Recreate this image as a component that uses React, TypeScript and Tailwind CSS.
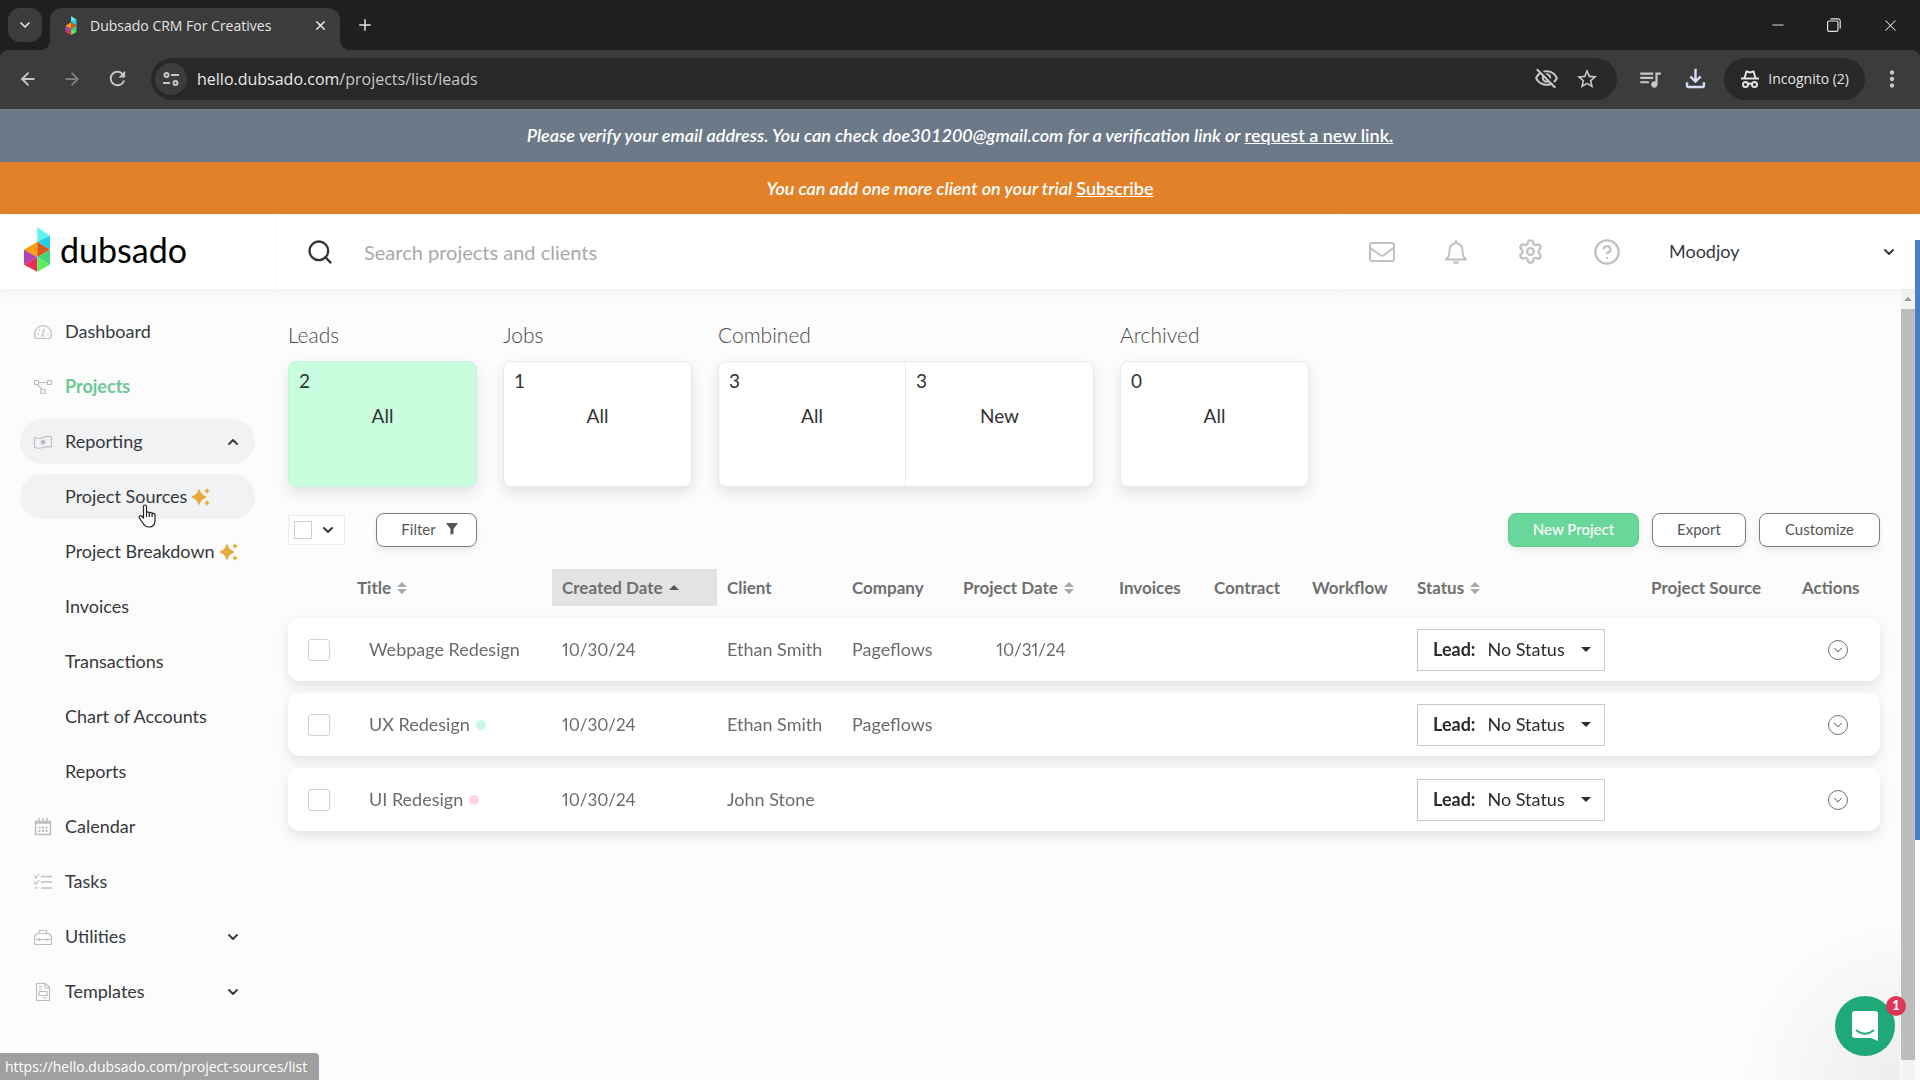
import { useState, type ReactNode } from 'react';
import { ArrowLeft, ArrowRight, ChevronDown, ChevronUp, CircleHelp, Minus, Plus, Search, Settings, X } from 'lucide-react';
import { MdOutlineFileDownload, MdOutlineVisibilityOff, MdQueueMusic, MdRefresh, MdStarOutline, MdMoreVert } from 'react-icons/md';

const chromeFont = "font-['Open_Sans','Noto_Sans',sans-serif]";

function DubsadoMark({ className }: { className: string }) {
  return (
    <svg viewBox="0 0 78 134" className={className} aria-hidden="true">
      <path d="M40 0 78 26 40 44Z" fill="#5ff3f4" />
      <path d="M78 26V68L40 44Z" fill="#22cfe6" />
      <path d="M0 68 40 44V90Z" fill="#f6a012" />
      <path d="M40 44 78 68 40 90Z" fill="#d9581c" />
      <path d="M0 68 40 90 0 113Z" fill="#b044b4" />
      <path d="M0 113 40 90V134Z" fill="#e5305c" />
      <path d="M40 90 78 68V113Z" fill="#3fd67c" />
      <path d="M40 90 78 113 40 134Z" fill="#5cf05a" />
    </svg>
  );
}

function IncognitoIcon() {
  return (
    <svg viewBox="0 0 20 20" className="size-5" fill="none" stroke="currentColor" strokeWidth="2" aria-hidden="true">
      <path d="M1 9.5h18" />
      <path d="M4.5 9 6.5 2.5l3.5 1 3.5-1 2 6.5" />
      <circle cx="5.5" cy="15.5" r="2.5" />
      <circle cx="14.5" cy="15.5" r="2.5" />
      <path d="M8 15q2-1 4 0" />
    </svg>
  );
}

function SiteInfoIcon() {
  return (
    <svg viewBox="0 0 16 16" className="size-4" fill="none" stroke="currentColor" strokeWidth="2" aria-hidden="true">
      <circle cx="3.5" cy="4" r="2" />
      <path d="M8 4h8M0 12h7" />
      <circle cx="12.5" cy="12" r="2" />
    </svg>
  );
}

function MailIcon() {
  return (
    <svg viewBox="0 0 26 20" className="h-5 w-[26px]" fill="none" stroke="currentColor" strokeWidth="2" strokeLinejoin="round" aria-hidden="true">
      <rect x="1" y="1" width="24" height="18" rx="2" />
      <path d="M1.500 6 11 13q2 1.500 4 0l9.500-7" />
    </svg>
  );
}

function BellIcon() {
  return (
    <svg viewBox="0 0 24 26" className="h-[26px] w-6" fill="none" stroke="currentColor" strokeWidth="2" aria-hidden="true">
      <path d="M12 1v3M2 20.500h20c-3-2.500-3.500-4.500-3.500-9a6.500 7.500 0 0 0-13 0c0 4.500-.5 6.500-3.500 9Z" strokeLinejoin="round" />
      <path d="M9.500 23.500h5" strokeWidth="2.500" />
    </svg>
  );
}

function Sparkle() {
  return (
    <svg viewBox="0 0 18 18" className="size-[18px] text-[#e8a93c]" fill="currentColor" aria-hidden="true">
      <path d="M7 2q1.500 5.500 6.500 7-5 1.500-6.500 7-1.500-5.500-6.500-7 5-1.500 6.500-7Z" stroke="currentColor" strokeWidth="1.400" strokeLinejoin="round" />
      <path d="M15 0q.6 2.400 3 3-2.400.6-3 3-.6-2.400-3-3 2.400-.6 3-3ZM15 12q.6 2.400 3 3-2.400.6-3 3-.6-2.400-3-3 2.400-.6 3-3Z" />
    </svg>
  );
}

function SortIcon() {
  return (
    <svg viewBox="0 0 10 12" className="h-3 w-2.5 text-[#a9a9a9]" fill="currentColor" aria-hidden="true">
      <path d="M5 0l5 5H0ZM5 12l5-5H0Z" />
    </svg>
  );
}

function HandCursor() {
  return (
    <svg viewBox="0 0 18 24" className="pointer-events-none absolute left-[118px] top-[30px] h-6 w-[18px]" fill="#fff" stroke="#222" strokeWidth="1.2" strokeLinejoin="round" aria-hidden="true">
      <path d="M5.500 14V2.500c0-2 3-2 3 0V9c.3-1.500 2.700-1.300 2.800.3.500-1.300 2.700-1 2.800.5.700-1 2.900-.7 2.900 1.200v5.500c0 4-2 6.500-6 6.500-3.500 0-5-1.500-6.500-4.500L1.300 14c-.8-1.500.7-3 2.200-2Z" />
      <path d="M8.500 9v4M11.300 9.500V13M14.100 10v3" fill="none" />
    </svg>
  );
}

// sidebar glyphs share one 18px box and a thin stroke
const glyphs: Record<string, ReactNode> = {
  Dashboard: (
    <>
      <path d="M1.800 15.500q-1.200-2-1.200-4.500a8.400 8.400 0 0 1 16.800 0q0 2.500-1.200 4.500Z" strokeLinejoin="round" />
      <path d="m8.200 12.500 2.300-7M3.500 11H5M5 6.500l1 1M13 11h1.500M7 13h3.500" />
    </>
  ),
  Projects: (
    <>
      <path d="M.5 2.500h4v4h-4ZM13.500 2.500h4v4h-4ZM7 11.500h4v4H7ZM4.500 4.500h9M3.500 6.500 8 11.500" />
    </>
  ),
  Reporting: (
    <>
      <path d="M.5 4.500q4 2 8.500 0t8.500-.5v10q-4-1-8.500.5t-8.500 0Z" />
      <circle cx="9" cy="9.200" r="1.800" fill="currentColor" />
    </>
  ),
  Calendar: (
    <>
      <path d="M1.500 3.500h15v13h-15ZM5 0v4M9 0v4M13 0v4M1.500 5h15" strokeWidth="1.500" />
      <path d="M4.500 9.500h9M4.500 13h9" strokeWidth="2" strokeDasharray="2 1.500" />
    </>
  ),
  Tasks: (
    <>
      <path d="m0 3 2 2 3-4M0 9l2 2 3-4" />
      <path d="M7 3.500h11M7 9h11M7 15h11M1 15h2.500" strokeWidth="1.500" />
    </>
  ),
  Utilities: (
    <>
      <path d="M.5 8.500 3 5.500h12l2.500 3v8H.5ZM5.500 5.500v-3h7v3M.5 11.500h17M5.500 10v3M12.500 10v3" />
    </>
  ),
  Templates: (
    <>
      <path d="M2.500.5h9l4 4v13h-13ZM11 .5V5h4.500M5 8.500h8v4H5ZM5 3.500h3M5 6h3M9 15h4" />
    </>
  ),
};

type NavItem = { label: string; icon?: boolean; chevron?: 'up' | 'down'; active?: boolean; pill?: boolean; isNew?: boolean; cursor?: boolean };

const nav: NavItem[] = [
  { label: 'Dashboard', icon: true },
  { label: 'Projects', icon: true, active: true },
  { label: 'Reporting', icon: true, chevron: 'up', pill: true },
  { label: 'Project Sources', isNew: true, pill: true, cursor: true },
  { label: 'Project Breakdown', isNew: true },
  { label: 'Invoices' },
  { label: 'Transactions' },
  { label: 'Chart of Accounts' },
  { label: 'Reports' },
  { label: 'Calendar', icon: true },
  { label: 'Tasks', icon: true },
  { label: 'Utilities', icon: true, chevron: 'down' },
  { label: 'Templates', icon: true, chevron: 'down' },
];

const groups = [
  { title: 'Leads', cards: [{ count: 2, label: 'All' }], selected: true },
  { title: 'Jobs', cards: [{ count: 1, label: 'All' }] },
  { title: 'Combined', cards: [{ count: 3, label: 'All' }, { count: 3, label: 'New' }] },
  { title: 'Archived', cards: [{ count: 0, label: 'All' }] },
];

const columns = [
  { label: '', width: 'w-[59px]' },
  { label: 'Title', width: 'w-[205px]', sort: true },
  { label: 'Created Date', width: 'w-[165px]', sorted: true },
  { label: 'Client', width: 'w-[125px]' },
  { label: 'Company', width: 'w-[111px]' },
  { label: 'Project Date', width: 'w-[156px]', sort: true },
  { label: 'Invoices', width: 'w-[95px]' },
  { label: 'Contract', width: 'w-[98px]' },
  { label: 'Workflow', width: 'w-[105px]' },
  { label: 'Status', width: 'w-[234px]', sort: true },
  { label: 'Project Source', width: 'w-[151px]' },
  { label: 'Actions', width: 'w-[88px]' },
];

const projects = [
  { title: 'Webpage Redesign', dot: '', created: '10/30/24', client: 'Ethan Smith', company: 'Pageflows', date: '10/31/24' },
  { title: 'UX Redesign', dot: 'bg-[#c3fbe6]', created: '10/30/24', client: 'Ethan Smith', company: 'Pageflows', date: '' },
  { title: 'UI Redesign', dot: 'bg-[#ffd3e2]', created: '10/30/24', client: 'John Stone', company: '', date: '' },
];

function BrowserChrome() {
  return (
    <div className={`${chromeFont} bg-[#1f1f1f] text-[#e3e3e3]`}>
      <div className="flex h-[50px] items-center">
        <button aria-label="Search tabs" className="ml-2 flex size-[34px] items-center justify-center rounded-xl bg-[#3c3c3c]">
          <ChevronDown size={16} strokeWidth={2.5} />
        </button>
        <div className="relative ml-2 mt-2 flex h-[42px] w-[290px] items-center rounded-t-xl bg-[#3c3c3c] pb-2 pl-3.5 pr-3 before:absolute before:-left-2.5 before:bottom-0 before:size-2.5 before:bg-[radial-gradient(circle_at_top_left,transparent_10px,#3c3c3c_10px)] after:absolute after:-right-2.5 after:bottom-0 after:size-2.5 after:bg-[radial-gradient(circle_at_top_right,transparent_10px,#3c3c3c_10px)]">
          <DubsadoMark className="mr-3 h-[19px] w-[14px]" />
          <span className="flex-1 truncate text-[14px]">Dubsado CRM For Creatives</span>
          <button aria-label="Close tab" className="flex size-4 items-center justify-center">
            <X size={15} strokeWidth={2.5} />
          </button>
        </div>
        <button aria-label="New tab" className="ml-4">
          <Plus size={18} strokeWidth={2} />
        </button>
        <div className="ml-auto flex items-center gap-10 pr-5">
          <button aria-label="Minimize"><Minus size={18} strokeWidth={1.3} /></button>
          <button aria-label="Restore">
            <svg viewBox="0 0 14 14" className="size-3.5" fill="none" stroke="currentColor" strokeWidth="1.200">
              <rect x=".6" y="3" width="10.400" height="10.400" rx="1.500" />
              <path d="M3.500.8h7.500a2.200 2.200 0 0 1 2.200 2.200v7.500" />
            </svg>
          </button>
          <button aria-label="Close"><X size={19} strokeWidth={1.3} /></button>
        </div>
      </div>

      <div className="flex h-[59px] items-center rounded-t-lg bg-[#3c3c3c] pb-0.5 pl-[18px] pr-[15px] text-[#c7c7c7]">
        <button aria-label="Back"><ArrowLeft size={20} strokeWidth={2.2} /></button>
        <button aria-label="Forward" className="ml-6 text-[#7c7c7c]"><ArrowRight size={20} strokeWidth={2.2} /></button>
        <button aria-label="Reload" className="ml-6"><MdRefresh size={23} /></button>
        <div className="ml-[22px] flex h-[42px] flex-1 items-center rounded-full bg-[#282828] pl-1 pr-[18px]">
          <button aria-label="Site information" className="flex size-8 items-center justify-center rounded-full bg-[#3c3c3c]">
            <SiteInfoIcon />
          </button>
          <p className="ml-2.5 flex-1 text-[16px] text-[#c7c7c7]">
            <span className="text-[#e8e8e8]">hello.dubsado.com</span>/projects/list/leads
          </p>
          <button aria-label="Third-party cookies blocked"><MdOutlineVisibilityOff size={25} /></button>
          <button aria-label="Bookmark this tab" className="ml-4"><MdStarOutline size={24} /></button>
        </div>
        <button aria-label="Media controls" className="ml-5"><MdQueueMusic size={26} /></button>
        <button aria-label="Downloads" className="ml-[18px] text-[#d5dcf5]"><MdOutlineFileDownload size={29} /></button>
        <button className="ml-[14px] flex h-[42px] items-center gap-2 rounded-full bg-[#282828] px-4 text-[14px] text-[#e3e3e3]">
          <IncognitoIcon />
          Incognito (2)
        </button>
        <button aria-label="Menu" className="ml-3.5"><MdMoreVert size={26} /></button>
      </div>
    </div>
  );
}

function Banners() {
  return (
    <div className="text-center text-[18px] font-semibold text-white">
      <p className="flex h-[53px] items-center justify-center gap-1 bg-[#6b7988]">
        <em>Please verify your email address. You can check doe301200@gmail.com for a verification link or</em>
        <a href="#verify" className="underline">request a new link.</a>
      </p>
      <p className="flex h-[52px] items-center justify-center gap-1 bg-[#e38129]">
        <em>You can add one more client on your trial</em>
        <a href="#subscribe" className="underline">Subscribe</a>
      </p>
    </div>
  );
}

function Header() {
  return (
    <header className="relative z-10 flex h-[75px] items-stretch bg-white shadow-[0_2px_12px_rgba(0,0,0,0.06)]">
      <a href="#home" className="flex w-[276px] items-center border-r border-[#fafafa] pb-1 pl-6">
        <DubsadoMark className="h-[45px] w-[26px]" />
        <span className="ml-2.5 font-['Lato',sans-serif] text-[34px] leading-10 text-black">dubsado</span>
      </a>
      <div className="flex flex-1 items-center pl-[30px]">
        <Search size={28} strokeWidth={2} className="text-[#2f3438]" />
        <input
          type="text"
          aria-label="Search projects and clients"
          placeholder="Search projects and clients"
          className="ml-[30px] flex-1 text-[20px] outline-none placeholder:text-[#a7a9ac]"
        />
      </div>
      <div className="flex items-center gap-[49px] border-l border-[#fafafa] pl-[26px] text-[#bfc1c4]">
        <button aria-label="Inbox"><MailIcon /></button>
        <button aria-label="Notifications"><BellIcon /></button>
        <button aria-label="Settings"><Settings size={27} strokeWidth={2} /></button>
        <button aria-label="Help"><CircleHelp size={28} strokeWidth={2} /></button>
      </div>
      <button className="ml-12 flex w-[251px] items-center justify-between pr-[23px] text-[18px] text-[#36393c]">
        Moodjoy
        <ChevronDown size={16} strokeWidth={2.8} />
      </button>
    </header>
  );
}

function Sidebar() {
  return (
    <nav className="w-[275px] shrink-0 px-5 pb-16 pt-5">
      <ul className="flex flex-col gap-2.5">
        {nav.map((item) => (
          <li key={item.label} className="relative">
            <a
              href="#nav"
              className={`flex h-[45px] items-center rounded-full pl-[14px] pr-[14px] text-[18px] ${item.pill ? 'bg-[#f1f2f4]' : ''} ${item.active ? 'font-bold text-[#6cc894]' : 'text-[#36393c]'}`}
            >
              <span className="mr-[13px] w-[18px] text-[#bcbec2]">
                {item.icon && (
                  <svg viewBox="0 0 18 18" className="size-[18px]" fill="none" stroke="currentColor" strokeWidth="1.200" aria-hidden="true">
                    {glyphs[item.label]}
                  </svg>
                )}
              </span>
              <span className="whitespace-nowrap">{item.label}</span>
              {item.isNew && <span className="ml-[5px]"><Sparkle /></span>}
              {item.chevron === 'up' && <ChevronUp size={16} strokeWidth={2.8} className="ml-auto" />}
              {item.chevron === 'down' && <ChevronDown size={16} strokeWidth={2.8} className="ml-auto" />}
            </a>
            {item.cursor && <HandCursor />}
          </li>
        ))}
      </ul>
    </nav>
  );
}

function StatusGroups() {
  return (
    <div className="flex gap-[26px]">
      {groups.map((group) => (
        <section key={group.title}>
          <h2 className="text-[21px] font-light leading-6 text-[#4a4a4a]">{group.title}</h2>
          <div className={`mt-[14px] flex h-[126px] divide-x divide-[#ececec] rounded-lg border shadow-[0_6px_14px_rgba(0,0,0,0.1)] ${group.selected ? 'border-[#c3f5da] bg-[#c8fede]' : 'border-[#e8e8e8] bg-white'}`}>
            {group.cards.map((card) => (
              <button key={card.label} className="flex w-[187px] flex-col px-2.5 pt-[7px] text-[19px] leading-6 text-[#333]">
                <span className="self-start">{card.count}</span>
                <span className="mt-[11px] self-center">{card.label}</span>
              </button>
            ))}
          </div>
        </section>
      ))}
    </div>
  );
}

function Toolbar() {
  const outline = 'flex h-[34px] items-center justify-center rounded-lg border border-[#7d7d7d] bg-white pb-0.5 text-[15px] text-[#555] shadow-[0_3px_6px_rgba(0,0,0,0.08)]';
  return (
    <div className="mt-[26px] flex items-center">
      <div className="flex h-[30px] w-[57px] items-center justify-between border border-[#ececec] bg-white pl-[5px] pr-2">
        <input type="checkbox" aria-label="Select all projects" className="size-[18px] appearance-none border border-[#cfcfcf] checked:bg-[#69d79a]" />
        <button aria-label="Selection options" className="text-[#333]"><ChevronDown size={16} strokeWidth={2.8} /></button>
      </div>
      <button className={`${outline} ml-[31px] w-[101px] gap-2.5 pl-1.5`}>
        Filter
        <svg viewBox="0 0 12 12" className="size-3" fill="currentColor" aria-hidden="true">
          <path d="M0 0h12L7.500 6v4.500L4.500 12V6Z" />
        </svg>
      </button>
      <div className="ml-auto flex gap-[13px]">
        <button className="flex h-[34px] w-[131px] items-center justify-center rounded-lg border border-[#5fcb90] bg-[#69d79a] pb-0.5 text-[15px] font-medium text-white shadow-[0_3px_6px_rgba(0,0,0,0.08)]">New Project</button>
        <button className={`${outline} w-[94px]`}>Export</button>
        <button className={`${outline} w-[121px]`}>Customize</button>
      </div>
    </div>
  );
}

function StatusSelect({ project }: { project: string }) {
  return (
    <div className="relative flex h-[42px] w-[188px] items-center border border-[#c9c9c9] bg-white pl-[15px] text-[18px] text-[#2c2c2c]">
      <b className="mr-3">Lead:</b>
      <select aria-label={`${project} status`} className="flex-1 appearance-none bg-transparent outline-none">
        <option>No Status</option>
      </select>
      <svg viewBox="0 0 10 5" className="pointer-events-none absolute right-[13px] h-[5px] w-2.5" fill="currentColor" aria-hidden="true">
        <path d="M0 0h10L5 5Z" />
      </svg>
    </div>
  );
}

function ProjectTable() {
  const [checked, setChecked] = useState<string[]>([]);
  const toggle = (title: string) =>
    setChecked((prev) => (prev.includes(title) ? prev.filter((t) => t !== title) : [...prev, title]));

  return (
    <table className="mt-2.5 w-full table-fixed border-separate border-spacing-x-0 border-spacing-y-3 text-left">
      <thead>
        <tr className="h-[37px] text-[17px] text-[#6f6f6f]">
          {columns.map((col) => (
            <th key={col.label} scope="col" className={`${col.width} whitespace-nowrap p-0 pl-2.5 font-bold ${col.sorted ? 'bg-[#e3e3e3]' : ''}`}>
              <span className="flex items-center gap-1.5">
                {col.label}
                {col.sort && <SortIcon />}
                {col.sorted && (
                  <svg viewBox="0 0 10 5" className="h-[5px] w-2.5" fill="#555" aria-hidden="true">
                    <path d="M0 5h10L5 0Z" />
                  </svg>
                )}
              </span>
            </th>
          ))}
        </tr>
      </thead>
      <tbody>
        {projects.map((p) => (
          <tr
            key={p.title}
            className="h-[63px] text-[18px] text-[#6b6b6b] drop-shadow-[0_5px_6px_rgba(0,0,0,0.1)] *:whitespace-nowrap *:bg-white *:p-0 *:pl-2.5 *:first:rounded-l-xl *:last:rounded-r-xl"
          >
            <td>
              <input
                type="checkbox"
                aria-label={`Select ${p.title}`}
                checked={checked.includes(p.title)}
                onChange={() => toggle(p.title)}
                className="ml-2.5 block size-[22px] appearance-none rounded-[3px] border border-[#d0d0d0] checked:bg-[#69d79a]"
              />
            </td>
            <td>
              <span className="flex items-center gap-1.5 pl-3">
                {p.title}
                {p.dot && <i className={`size-2.5 rounded-full ${p.dot}`} />}
              </span>
            </td>
            <td className="text-[17px] proportional-nums">{p.created}</td>
            <td>{p.client}</td>
            <td>{p.company}</td>
            <td className="text-[17px] proportional-nums"><span className="block pr-2.5 text-center">{p.date}</span></td>
            <td />
            <td />
            <td />
            <td><StatusSelect project={p.title} /></td>
            <td />
            <td>
              <button aria-label={`Actions for ${p.title}`} className="ml-[26px] flex size-5 items-center justify-center rounded-full border border-[#6f6f6f]">
                <ChevronDown size={14} strokeWidth={1.8} />
              </button>
            </td>
          </tr>
        ))}
      </tbody>
    </table>
  );
}

export default function App() {
  return (
    <div className="relative flex min-h-screen flex-col bg-[#fcfcfc] font-['Lato','Open_Sans',sans-serif]">
      <BrowserChrome />
      <Banners />
      <Header />
      <div className="flex flex-1">
        <Sidebar />
        <main className="min-w-0 flex-1 pl-[13px] pr-[21px] pt-[34px]">
          <StatusGroups />
          <Toolbar />
          <ProjectTable />
        </main>
        <div className="mr-[5px] flex w-[14px] flex-col items-center bg-[#f4f4f4] pb-5 pt-2">
          <svg viewBox="0 0 8 4" className="h-1 w-2" fill="#9a9a9a" aria-hidden="true">
            <path d="M0 4h8L4 0Z" />
          </svg>
          <div className="mt-2 w-full flex-1 bg-[#bdbdbd]" />
        </div>
      </div>

      {/* edge of the window behind */}
      <div className="absolute right-0 top-[240px] z-20 h-[600px] w-[5px] bg-[#4a7fc4]" />

      <div className={`${chromeFont} absolute bottom-0 left-0 rounded-tr-sm bg-[#a0a0a0] py-[3px] pl-[5px] pr-3 text-[14px] leading-[21px] text-white`}>
        https://hello.dubsado.com/project-sources/list
      </div>

      <div className="pointer-events-none absolute bottom-0 right-5 size-40 bg-[radial-gradient(circle_at_bottom_right,rgba(0,0,0,0.06),transparent_70%)]" />
      <button aria-label="Open chat, 1 unread" className="absolute bottom-6 right-[25px] z-20 flex size-[60px] items-center justify-center rounded-full bg-[#20a978]">
        <svg viewBox="0 0 26 30" className="h-[30px] w-[26px]" aria-hidden="true">
          <path d="M3 0h20a3 3 0 0 1 3 3v27l-7-3H3a3 3 0 0 1-3-3V3a3 3 0 0 1 3-3Z" fill="#fff" />
          <path d="M4.500 19.500q8.500 6.500 17 0" fill="none" stroke="#20a978" strokeWidth="1.800" strokeLinecap="round" />
        </svg>
        <span className="absolute -right-[11px] top-0 flex size-5 items-center justify-center rounded-full bg-[#e03556] text-[13px] font-black text-white">1</span>
      </button>
    </div>
  );
}
